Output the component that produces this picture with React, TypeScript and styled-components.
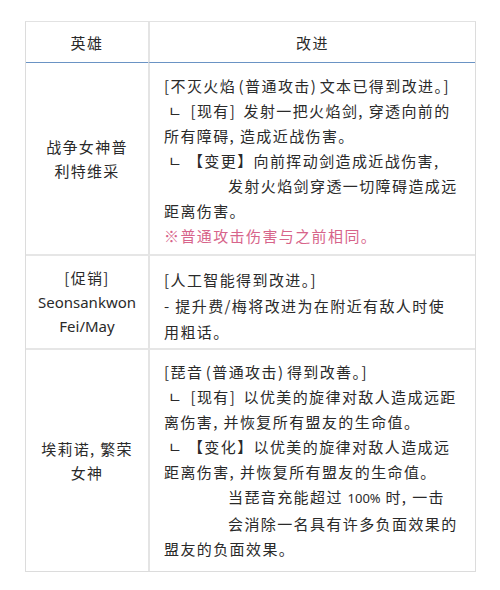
import React from "react";
import styled, { createGlobalStyle } from "styled-components";

const Global = createGlobalStyle`
  html, body { margin: 0; padding: 0; background: #ffffff; }
  body { font-family: "Noto Sans CJK SC", "Noto Sans", sans-serif; color: #2a2a2a; }
`;

const Page = styled.div`
  width: 500px;
  height: 590px;
  padding: 21px 0 0 25px;
  box-sizing: border-box;
`;

const Table = styled.div`
  width: 451px;
  box-sizing: border-box;
  display: grid;
  grid-template-columns: 122px minmax(0, 1fr);
  border: 1px solid #dcdcdc;
  border-top: 1px solid #e2e2e2;
`;

const HeadCell = styled.div<{ $first?: boolean }>`
  height: 40px;
  display: flex;
  align-items: center;
  justify-content: center;
  font-size: 15px;
  letter-spacing: 1.5px;
  border-bottom: 1.5px solid #6a93c4;
  border-left: ${(p) => (p.$first ? "none" : "2px solid #e4e4e4")};
`;

const NameCell = styled.div<{ $last?: boolean }>`
  display: flex;
  flex-direction: column;
  align-items: center;
  justify-content: center;
  text-align: center;
  font-size: 15px;
  line-height: 24px;
  letter-spacing: 1.3px;
  border-bottom: ${(p) => (p.$last ? "none" : "2px solid #e6e6e6")};
`;

const Latin = styled.span`
  font-family: "Noto Sans", sans-serif;
  letter-spacing: 0;
  font-size: 15px;
`;

const BodyCell = styled.div<{ $last?: boolean; $pt: number; $pb: number }>`
  border-left: 2px solid #e4e4e4;
  border-bottom: ${(p) => (p.$last ? "none" : "2px solid #e6e6e6")};
  padding: ${(p) => p.$pt}px 0 ${(p) => p.$pb}px 14px;
  display: flex;
  flex-direction: column;
  overflow: hidden;
`;

const LineBox = styled.div<{ $indent?: number; $pink?: boolean; $lh?: number }>`
  white-space: nowrap;
  font-size: 15px;
  line-height: ${(p) => p.$lh ?? 25}px;
  letter-spacing: 1.4px;
  padding-left: ${(p) => p.$indent ?? 0}px;
  color: ${(p) => (p.$pink ? "#d7648a" : "#2a2a2a")};
`;

const Punct = styled.span<{ $open: boolean; $lead: boolean }>`
  margin-left: ${(p) => (p.$open && !p.$lead ? 2.5 : 0)}px;
  margin-right: ${(p) => (p.$open ? 0 : 2.5)}px;
`;

const Num = styled.span`
  font-family: "Noto Sans", sans-serif;
  letter-spacing: 0;
  font-size: 13px;
`;

function withPunct(s: string) {
  const parts: React.ReactNode[] = [];
  let buf = "";
  [...s].forEach((ch, i) => {
    if ("[]()".includes(ch)) {
      if (buf) parts.push(buf);
      buf = "";
      parts.push(
        <Punct key={i} $open={ch === "[" || ch === "("} $lead={i === 0}>
          {ch}
        </Punct>
      );
    } else buf += ch;
  });
  if (buf) parts.push(buf);
  return parts;
}

type LineProps = {
  text: string;
  indent?: number;
  pink?: boolean;
  lh?: number;
  children?: React.ReactNode;
};

function Line({ text, indent, pink, lh, children }: LineProps) {
  return (
    <LineBox $indent={indent} $pink={pink} $lh={lh}>
      {withPunct(text)}
      {children}
    </LineBox>
  );
}

export default function App() {
  return (
    <Page>
      <Global />
      <Table>
        <HeadCell $first>英雄</HeadCell>
        <HeadCell>改进</HeadCell>

        <NameCell>
          <div>战争女神普</div>
          <div>利特维采</div>
        </NameCell>
        <BodyCell $pt={10} $pb={6}>
          <Line text="[不灭火焰(普通攻击)文本已得到改进。]" />
          <Line indent={4} text="ㄴ [现有] 发射一把火焰剑, 穿透向前的" />
          <Line text="所有障碍, 造成近战伤害。" />
          <Line indent={4} text="ㄴ 【变更】向前挥动剑造成近战伤害," />
          <Line indent={64} text="发射火焰剑穿透一切障碍造成远" />
          <Line text="距离伤害。" />
          <Line pink text="※普通攻击伤害与之前相同。" />
        </BodyCell>

        <NameCell>
          <div>[促销]</div>
          <Latin>Seonsankwon</Latin>
          <Latin>Fei/May</Latin>
        </NameCell>
        <BodyCell $pt={11} $pb={3}>
          <Line lh={26} text="[人工智能得到改进。]" />
          <Line lh={26} text="- 提升费/梅将改进为在附近有敌人时使" />
          <Line lh={26} text="用粗话。" />
        </BodyCell>

        <NameCell $last>
          <div>埃莉诺, 繁荣</div>
          <div>女神</div>
        </NameCell>
        <BodyCell $last $pt={9} $pb={10}>
          <Line text="[琵音(普通攻击)得到改善。]" />
          <Line indent={4} text="ㄴ [现有] 以优美的旋律对敌人造成远距" />
          <Line text="离伤害, 并恢复所有盟友的生命值。" />
          <Line indent={4} text="ㄴ 【变化】以优美的旋律对敌人造成远" />
          <Line text="距离伤害, 并恢复所有盟友的生命值。" />
          <Line indent={64} text="当琵音充能超过 ">
            <Num>100%</Num> 时, 一击
          </Line>
          <Line indent={64} text="会消除一名具有许多负面效果的" />
          <Line text="盟友的负面效果。" />
        </BodyCell>
      </Table>
    </Page>
  );
}
